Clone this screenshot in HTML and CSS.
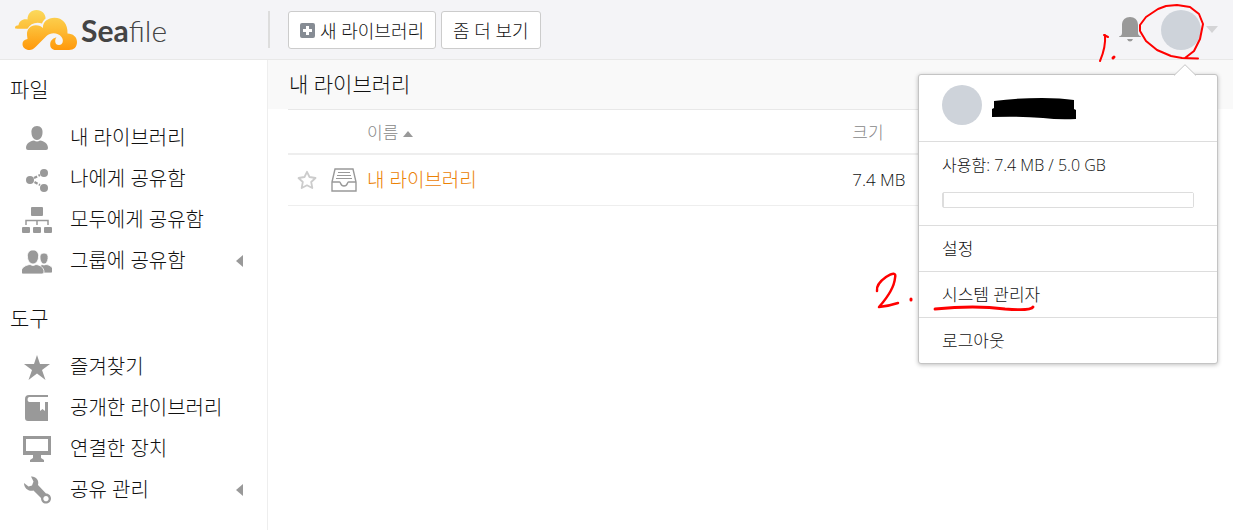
FILE: index.html
```html
<!DOCTYPE html>
<html lang="ko">
<head>
<meta charset="utf-8">
<meta name="viewport" content="width=device-width, initial-scale=1">
<title>Seafile</title>
<link rel="stylesheet" href="styles.css">
</head>
<body>
<header class="topbar">
  <a class="brand" href="#">
    <svg class="brand-mark" width="62" height="40" viewBox="0 0 62 40" aria-hidden="true">
      <defs><linearGradient id="cloud" gradientUnits="userSpaceOnUse" x1="0" y1="0" x2="0" y2="40"><stop offset="0" stop-color="#fbd95c"/><stop offset=".45" stop-color="#fdbf38"/><stop offset="1" stop-color="#ff980b"/></linearGradient></defs>
      <path fill="url(#cloud)" d="M0 17.500C0 16 2 15.500 3.500 15.300C4 11 8 8.500 12.500 9.500C12.500 4 16 0 21.500 0C27 0 30.500 4 30.600 8.500C29 9.700 27.700 11.500 27 13.500C21 11.500 15.500 13.500 12.500 18.700L2 18.700C.8 18.700 0 18.300 0 17.500Z"/>
      <path fill="url(#cloud)" d="M12 25C11.500 19 16 15 21 15.300C24 15.300 26.500 16.500 28 18C27.500 12 33 7.800 39.500 7.800C47.500 7.800 53 14 52.500 23.500C58 23.500 62 27 62 32C62 37 59 40 54 40L41 40C37 40 35 37.500 35.200 34C35.400 30.500 38 28 41.500 27.200C39.500 29.500 39.500 35 44 35C48 35 49 30 46.500 27C43 22.500 36 22 31.500 26L20.500 37C18.500 39 17 40 14.500 40C10.500 40 7.500 37.500 7.500 34C7.500 31.500 9 29.700 12.500 29Z"/>
    </svg>
    <span class="brand-name"><b>Sea</b>file</span>
  </a>
  <div class="toolbar">
    <button class="btn" type="button"><svg width="15" height="15" viewBox="0 0 15 15" aria-hidden="true"><path fill="#868c94" fill-rule="evenodd" d="M2 0H13Q15 0 15 2V13Q15 15 13 15H2Q0 15 0 13V2Q0 0 2 0ZM6 3V6H3V9H6V12H9V9H12V6H9V3Z"/></svg>새 라이브러리</button>
    <button class="btn" type="button">좀 더 보기</button>
  </div>
  <div class="account">
    <button class="icon-btn" type="button" aria-label="알림"><svg width="24" height="26" viewBox="0 0 24 26"><path fill="#999" d="M12 0C16.500 0 20 2.800 20 8V16C20 18 21.500 19 23 19.500V20H1V19.500C3 19 4 18 4 16V8C4 2.800 7.500 0 12 0ZM9 22H15Q14 24.500 12 24.500Q10 24.500 9 22Z"/></svg></button>
    <button class="icon-btn user-btn" type="button" aria-label="계정"><span class="avatar"></span><svg width="12" height="7" viewBox="0 0 12 7"><path fill="#d4d4d6" d="M0 0H12L6 7Z"/></svg></button>
    <div class="popover">
      <svg class="popover-tip" width="22" height="12" viewBox="0 0 22 12" aria-hidden="true"><path d="M0 11.500L11 .7L22 11.500" fill="#fff" stroke="#c4c4c4"/></svg>
      <div class="profile">
        <span class="avatar"></span>
        <svg width="84" height="22" viewBox="0 0 84 22" aria-hidden="true"><path d="M2 3Q25 0 50 0Q69 0 82 2V11L84 12V21Q67 22 51 20Q27 18 0 19V11L2 10Z"/></svg>
      </div>
      <div class="quota"><label for="usage">사용함: 7.4 MB / 5.0 GB</label><progress id="usage" value="7.4" max="5120"></progress></div>
      <a class="menu-link" href="#">설정</a>
      <a class="menu-link" href="#">시스템 관리자</a>
      <a class="menu-link" href="#">로그아웃</a>
    </div>
  </div>
</header>
<div class="layout">
  <nav class="sidebar">
    <h2>파일</h2>
    <ul>
      <li><a href="#"><svg viewBox="0 0 30 28"><path fill="#999" d="M15 2C19 2 21 5 20.500 9C20.300 13 18 16 15 16S9.700 13 9.500 9C9 5 11 2 15 2ZM4 24C4 19.500 8 17 12 16.500Q15 18.500 18 16.500C22 17 26 19.500 26 24Q26 26 24 26H6Q4 26 4 24Z"/></svg>내 라이브러리</a></li>
      <li><a href="#"><svg viewBox="0 0 30 28"><g fill="#999"><circle cx="8" cy="15" r="4"/><circle cx="22" cy="8" r="4"/><circle cx="22" cy="23" r="4"/></g><path d="M12 13L18 10M12.500 17L18 20" stroke="#999" stroke-width="2.200" stroke-dasharray="3.500 1.500"/></svg>나에게 공유함</a></li>
      <li><a href="#"><svg viewBox="0 0 30 28"><path fill="#999" d="M10 1H20Q21 1 21 2V9Q21 10 20 10H10Q9 10 9 9V2Q9 1 10 1ZM1 21H7Q8 21 8 22V26Q8 27 7 27H1Q0 27 0 26V22Q0 21 1 21ZM12 21H18Q19 21 19 22V26Q19 27 18 27H12Q11 27 11 26V22Q11 21 12 21ZM23 21H29Q30 21 30 22V26Q30 27 29 27H23Q22 27 22 26V22Q22 21 23 21Z"/><path d="M4 19V14.500H26V19M15 14V19" fill="none" stroke="#999" stroke-width="1.500"/></svg>모두에게 공유함</a></li>
      <li><a href="#"><svg viewBox="0 0 30 28"><path fill="#999" stroke="#fff" stroke-width=".8" d="M22 6C25 6 26.500 8 26 11.500C25.800 14.500 24 17 22 17S18 14 18 11C17.500 8 19 6 22 6ZM16 19Q19 19 20 17.500Q22 18.500 24 17.500C28 18 31 20 31 24Q31 26 29 26H16Z"/><path fill="#999" stroke="#fff" stroke-width=".8" d="M11 3C15 3 17 6 16.500 10C16.300 14 14 17 11 17S5.700 14 5.500 10C5 6 7 3 11 3ZM-1 25C-1 20.500 4 18 8 17.500Q11 19.500 14 17.500C18 18 22 20.500 22 25Q22 27 20 27H1Q-1 27-1 25Z"/></svg>그룹에 공유함<svg class="caret" viewBox="0 0 7 12"><path fill="#999" d="M7 0V12L0 6Z"/></svg></a></li>
    </ul>
    <h2>도구</h2>
    <ul>
      <li><a href="#"><svg viewBox="0 0 30 28"><path fill="#999" d="M15 2L18 11H28L20 17L23.500 27L15 20.500L6.500 27L10 17L2 11H12Z"/></svg>즐겨찾기</a></li>
      <li><a href="#"><svg viewBox="0 0 30 28"><path fill="#999" fill-rule="evenodd" d="M7 1H26V3H7.500C5 3 5 8 7.500 8H18V17L20.500 15L23 17V8H26V27H6Q3 27 3 24V5Q3 1 7 1Z"/></svg>공개한 라이브러리</a></li>
      <li><a href="#"><svg viewBox="0 0 30 28"><path fill="#999" fill-rule="evenodd" d="M1 1H29V20H19V23L22 25V27H8V25L11 23V20H1ZM4 4V16H26V4Z"/></svg>연결한 장치</a></li>
      <li><a href="#"><svg viewBox="0 0 30 28"><path fill="#999" fill-rule="evenodd" d="M9 .5C13.500 0 17.500 4 16 9L24 17.500C27 17.500 29 20 29 22.500C29 25.500 26.500 27.500 24 27.500C21 27.500 19 25.500 19 22L11.500 14.500C7 16 2 12.500 2 7L6.500 10.500L10 9.500L11.500 5.500ZM24 20C22.500 20 21.300 21.200 21.300 22.700S22.500 25.300 24 25.300S26.700 24.200 26.700 22.700S25.500 20 24 20Z"/></svg>공유 관리<svg class="caret" viewBox="0 0 7 12"><path fill="#999" d="M7 0V12L0 6Z"/></svg></a></li>
    </ul>
  </nav>
  <main class="content">
    <h1>내 라이브러리</h1>
    <div class="table-wrap">
    <table>
      <thead><tr><th class="col-star"></th><th class="col-icon"></th><th class="col-name">이름 <svg width="10" height="6" viewBox="0 0 10 6"><path fill="#999" d="M0 6L5 0L10 6Z"/></svg></th><th class="col-size">크기</th></tr></thead>
      <tbody><tr>
        <td><button class="icon-btn" type="button" aria-label="즐겨찾기"><svg width="20" height="20" viewBox="0 0 20 20"><path fill="none" stroke="#ccc" stroke-width="1.800" stroke-linejoin="round" d="M10 1.800L12.500 7L18.500 8L14.200 12L15.300 18L10 15.300L4.700 18L5.800 12L1.500 8L7.500 7Z"/></svg></button></td>
        <td><svg width="26" height="24" viewBox="0 0 26 24"><g fill="none" stroke="#999"><path stroke-width="1.400" d="M1 14L4 1H22L25 14V23H1ZM1 14H8.500C10 14 9 18 13 18S16 14 17.500 14H25"/><path stroke-width="1.200" d="M7 4.500H19M6 7.500H20M5 10.500H21"/></g></svg></td>
        <td><a class="library" href="#">내 라이브러리</a></td><td class="size">7.4 MB</td>
      </tr></tbody>
    </table>
    </div>
  </main>
</div>
<svg class="marks" width="370" height="380" viewBox="863 0 370 380" aria-hidden="true">
  <g fill="none" stroke="#f00" stroke-width="2" stroke-linecap="round" stroke-linejoin="round">
    <path d="M1140 31V25L1146 17L1158 9L1166 6L1177 5L1190 7L1199 14L1203 24L1200 39L1194 51L1185 58M1140 31L1146 41L1157 50L1171 56L1182 58L1198 58.500"/>
    <path d="M1104 35L1108 37M1105 35Q1106 47 1100 61"/><path stroke-width="3" d="M1113 58L1114 57"/>
    <path stroke-width="2.500" d="M877 291Q876 284 886 277Q897 270 895 278Q894 290 879 307Q889 306 898 303"/><path stroke-width="3" d="M911 300L911 299"/>
    <path stroke-width="2.800" d="M935 309Q975 305 1005 309Q1031 311 1033 307"/>
  </g>
</svg>
</body>
</html>
```

FILE: styles.css
```css
* { box-sizing: border-box; }
body {
  margin: 0;
  min-height: 100vh;
  display: flex;
  flex-direction: column;
  background: #fff;
  color: #111;
  font: 300 16px/24px "Open Sans", "Noto Sans CJK KR", sans-serif;
}
a { color: inherit; text-decoration: none; }
button { font: inherit; color: inherit; cursor: pointer; }
svg { display: block; flex: none; }

.topbar {
  display: flex;
  align-items: center;
  height: 60px;
  background: #f4f4f7;
  border-bottom: 1px solid #e8e8e8;
}
.brand {
  display: flex;
  align-items: center;
  gap: 4px;
  flex: none;
  width: 270px;
  height: 37px;
  padding-left: 15px;
  border-right: 2px solid #ddd;
}
.brand-name { font: 300 30px/36px Lato, sans-serif; color: #444; }
.brand-name b { font-weight: 700; }
.toolbar { display: flex; gap: 5px; padding-left: 18px; }
.btn {
  display: flex;
  align-items: center;
  gap: 5px;
  height: 38px;
  padding: 2px 11px 0;
  background: #fff;
  border: 1px solid #ccc;
  border-radius: 3px;
  font-size: 18px;
}
.account {
  position: relative;
  display: flex;
  align-items: center;
  gap: 19px;
  margin-left: auto;
  padding-right: 15px;
}
.icon-btn { display: block; padding: 0; border: 0; background: none; }
.user-btn { display: flex; align-items: center; gap: 5px; }
.avatar { flex: none; width: 40px; height: 40px; border-radius: 50%; background: #ced3da; }

.popover {
  position: absolute;
  top: 100%;
  right: 15px;
  z-index: 2;
  width: 300px;
  margin-top: 24px;
  background: #fff;
  border: 1px solid #c4c4c4;
  border-radius: 3px;
  box-shadow: 0 1px 4px rgba(0, 0, 0, .25);
}
.popover-tip { position: absolute; right: 21px; bottom: 100%; margin-bottom: -1px; }
.profile { display: flex; align-items: center; gap: 10px; padding: 10px 23px 16px; }
.profile svg { margin-top: 8px; }
.quota { padding: 11px 23px 17px; border-top: 1px solid #ddd; }
.quota label { display: block; }
.quota progress {
  display: block;
  appearance: none;
  width: 100%;
  height: 16px;
  margin-top: 15px;
  border: 1px solid #ddd;
  border-radius: 2px;
  background: #fff;
}
.quota progress::-webkit-progress-bar { background: #fff; }
.quota progress::-webkit-progress-value { background: #ddd; }
.menu-link { display: block; padding: 11px 23px 10px; border-top: 1px solid #ddd; font-size: 17px; }

.layout { display: flex; flex: 1; }
.sidebar { flex: none; width: 268px; border-right: 1px solid #eee; padding: 13px 20px 0 10px; }
.sidebar h2 { margin: 0; font-size: 21px; line-height: 32px; font-weight: 300; }
.sidebar ul { list-style: none; margin: 0 0 21px; padding: 12px 0 0 12px; }
.sidebar a { display: flex; align-items: center; gap: 18px; height: 41px; padding-right: 4px; font-size: 20px; }
.sidebar svg { width: 30px; height: 28px; }
.sidebar .caret { width: 7px; height: 12px; margin-left: auto; }

.content { flex: 1; min-width: 0; }
.content h1 { margin: 0; padding: 8px 21px 9px; background: #f9f9f9; font-size: 21px; line-height: 32px; font-weight: 300; }
.table-wrap { padding: 0 20px; }
table { width: 100%; border-collapse: collapse; table-layout: fixed; border-top: 1px solid #e8e8e8; }
th { height: 44px; padding: 4px 0 0; border-bottom: 2px solid #eee; text-align: left; font-size: 17px; font-weight: 300; color: #888; }
th svg { display: inline-block; vertical-align: 2px; }
td { height: 52px; padding: 1px 0 0; border-bottom: 1px solid #eee; }
td:first-child { padding-left: 9px; }
.col-star { width: 43px; }
.col-icon { width: 36px; }
.col-size { width: 39%; }
.library { color: #eb8205; font-size: 19px; }
.size { font-size: 17px; }

.marks { position: absolute; top: 0; right: 0; z-index: 3; pointer-events: none; }
```
